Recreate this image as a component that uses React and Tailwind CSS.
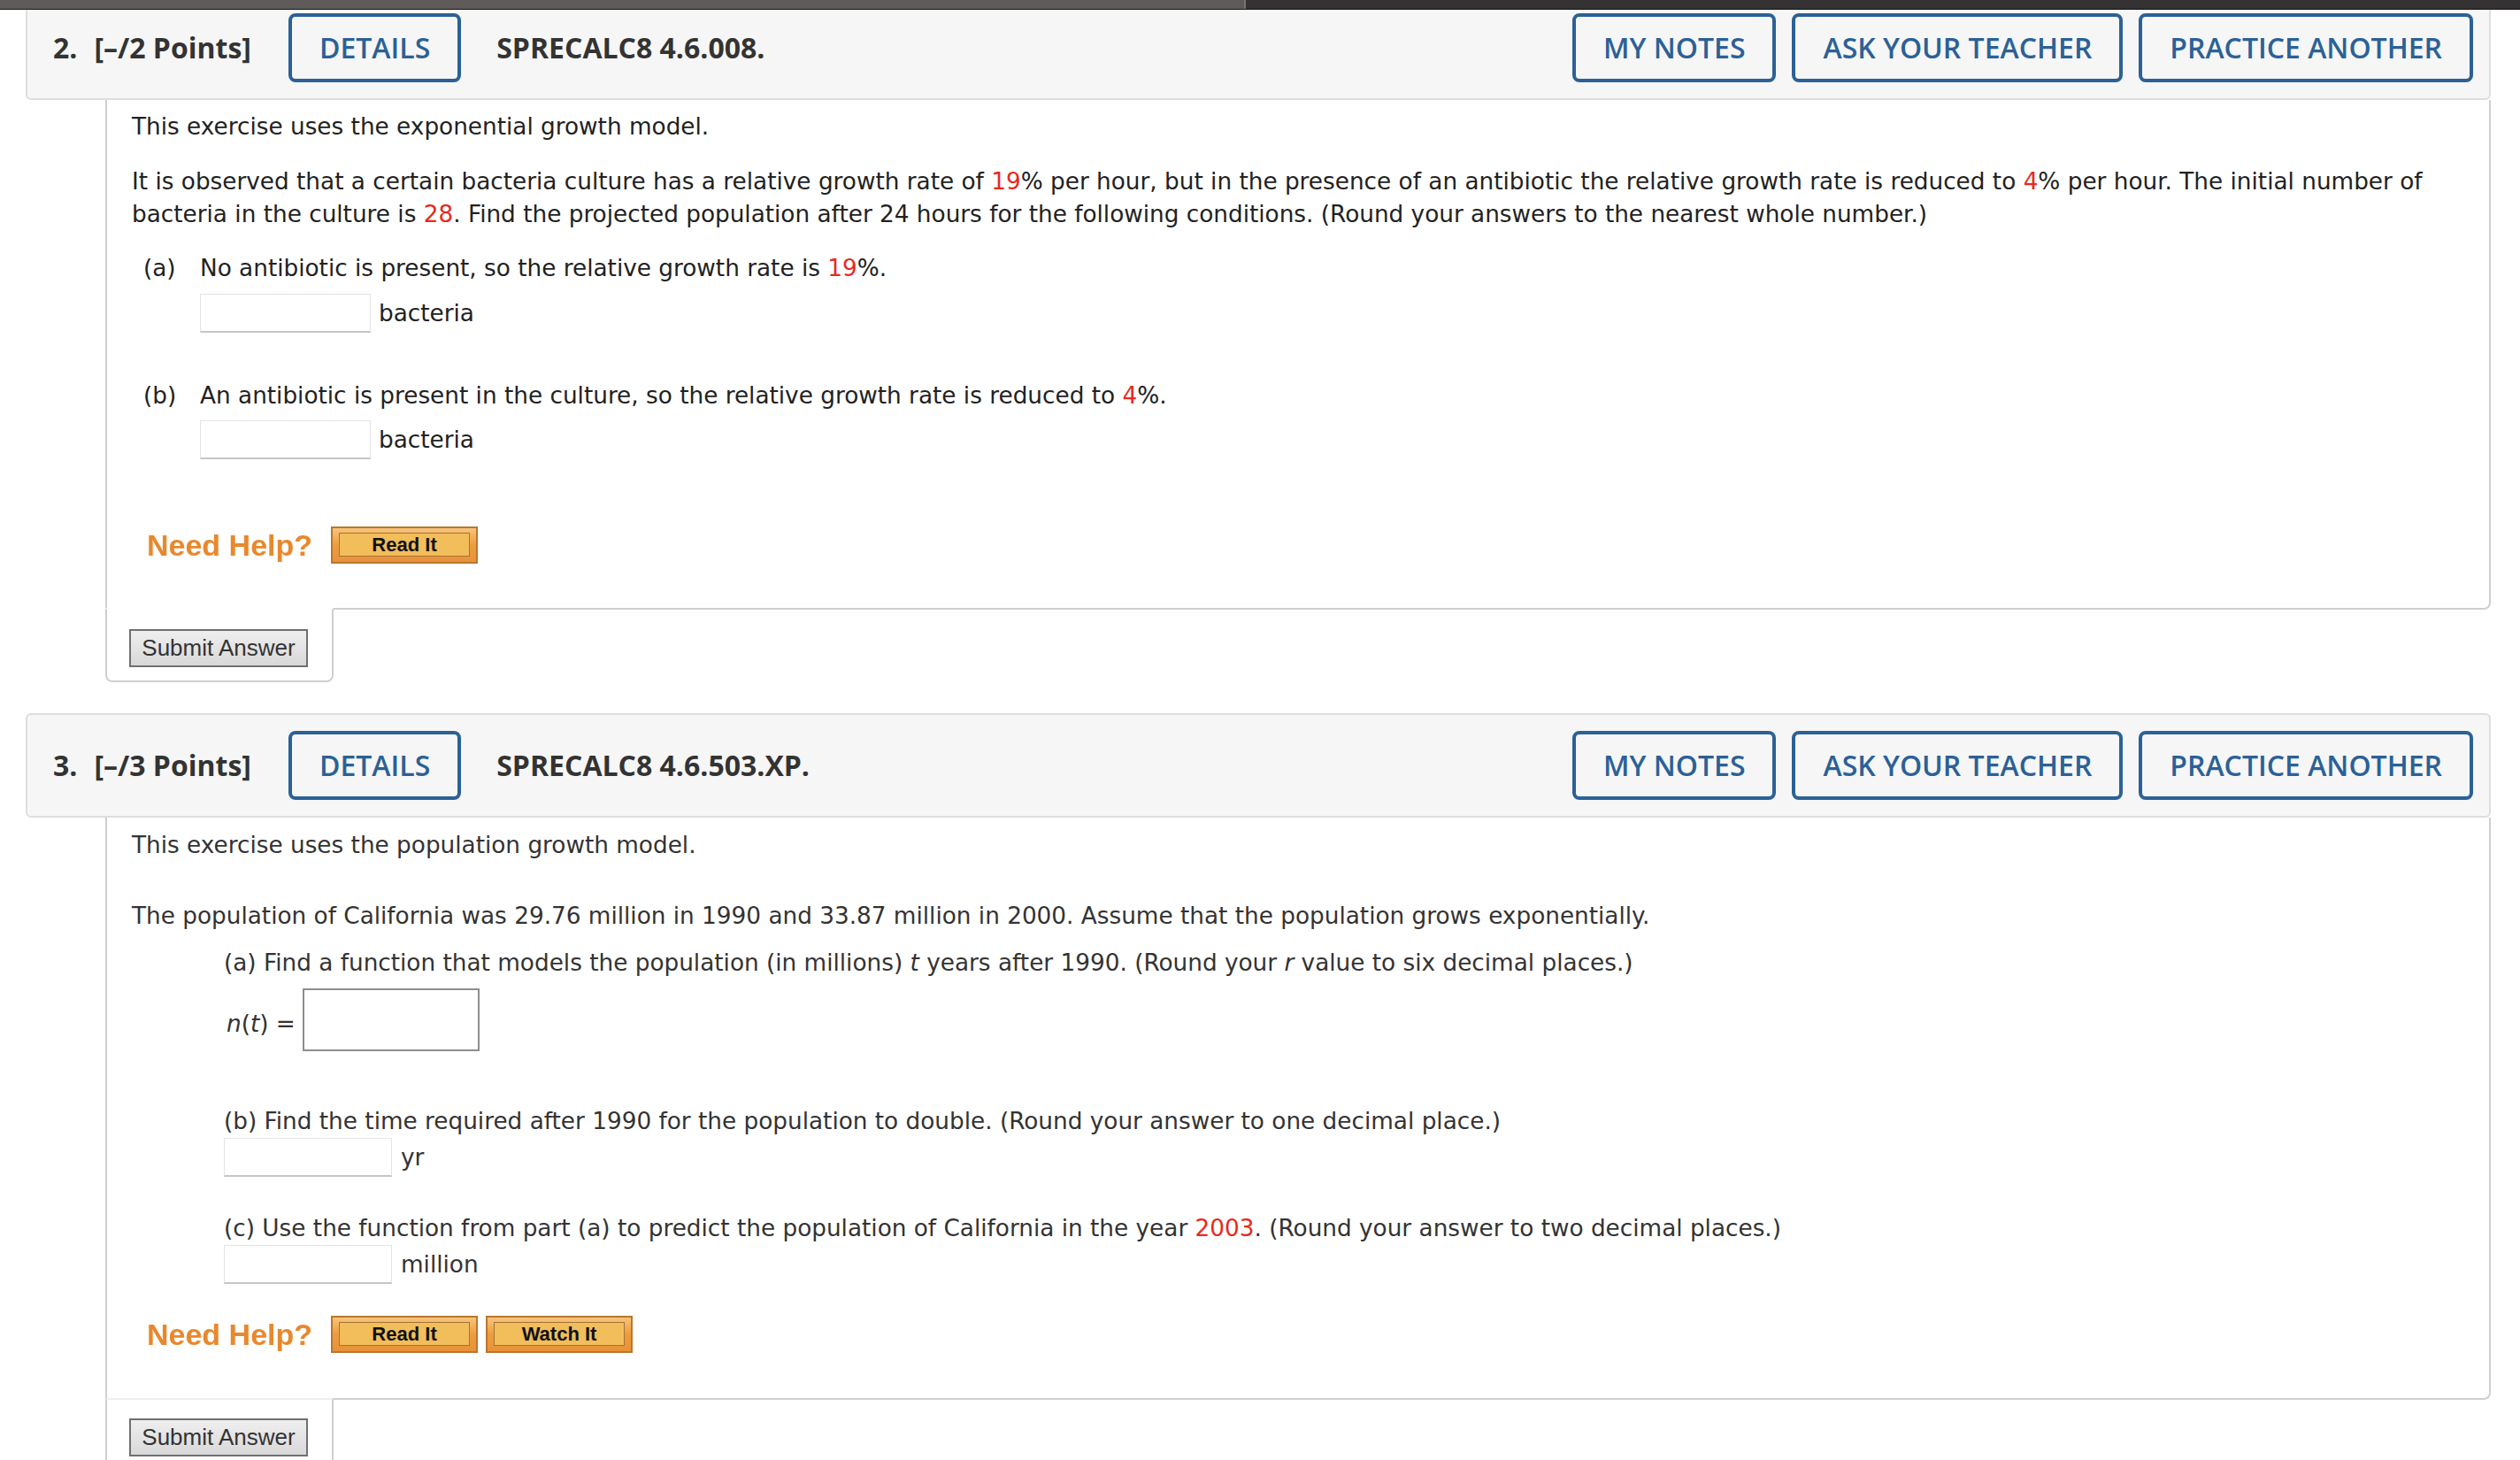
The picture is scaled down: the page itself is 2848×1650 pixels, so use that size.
import React from 'react';

const body = "font-['DejaVu_Sans',sans-serif] text-[26.3px] leading-[37px]";

function Red({ children }) {
  return <span className="text-[#e8291c]">{children}</span>;
}

function HeaderButton({ children }) {
  return (
    <button className="h-[78px] px-[31px] border-[4px] border-[#2b6196] rounded-[8px] text-[#2b6196] font-semibold bg-transparent">
      {children}
    </button>
  );
}

function Header({ number, points, code, first }) {
  return (
    <div
      className={`${first ? '-mt-[16px]' : 'mt-[35px]'} flex items-center h-[118px] pl-[29px] pr-[18px] border-2 border-[#dedede] rounded-[6px] bg-[#f6f6f6] font-['Open_Sans',sans-serif] text-[32px] text-[#333]`}
    >
      <span className="font-bold">{number}.</span>
      <span className="font-bold ml-[19px]">[–/{points} Points]</span>
      <div className="ml-[42px]">
        <HeaderButton>DETAILS</HeaderButton>
      </div>
      <span className="font-bold ml-[40px]">{code}</span>
      <div className="ml-auto flex gap-[18px]">
        <HeaderButton>MY NOTES</HeaderButton>
        <HeaderButton>ASK YOUR TEACHER</HeaderButton>
        <HeaderButton>PRACTICE ANOTHER</HeaderButton>
      </div>
    </div>
  );
}

function AnswerBox({ width }) {
  return (
    <span
      className={`inline-block h-[44px] ${width} bg-white border border-[#e4e4e4] border-b-2 border-b-[#c6c6c6]`}
    />
  );
}

function HelpButton({ label }) {
  return (
    <span className="inline-flex h-[42px] w-[166px] p-[5px_7px_6px_7px] border-2 border-[#b8772f] bg-gradient-to-b from-[#f7c47a] via-[#ee9c3e] to-[#e8923a]">
      <span className="flex-1 flex items-center justify-center border border-[#a27438] bg-[#f2bd5b] font-['Liberation_Sans',sans-serif] font-bold text-[22px] text-[#111]">
        {label}
      </span>
    </span>
  );
}

function NeedHelp({ buttons }) {
  return (
    <div className="flex items-center pl-[17px]">
      <span className="font-['Liberation_Sans',sans-serif] font-bold text-[34px] text-[#e8882d] blur-[0.6px]">
        Need Help?
      </span>
      <div className="flex gap-[9px] ml-[21px]">
        {buttons.map((b) => (
          <HelpButton key={b} label={b} />
        ))}
      </div>
    </div>
  );
}

function SubmitTab({ pt, topLine }) {
  return (
    <div
      className={`relative -mt-[2px] w-[258px] ${pt} pb-[15px] pl-[25px] border-2 ${topLine} border-x-[#cfcfcf] border-b-[#cfcfcf] rounded-b-[8px] bg-white`}
    >
      <button className="h-[43px] w-[202px] border-2 border-[#707070] bg-gradient-to-b from-[#efefef] to-[#d8d8d8] font-['Liberation_Sans',sans-serif] text-[26px] text-[#333]">
        Submit Answer
      </button>
    </div>
  );
}

function Question2() {
  return (
    <>
      <Header number={2} points={2} code="SPRECALC8 4.6.008." first />
      <div className="ml-[90px]">
        <div className={`${body} text-[#222] border-x-2 border-b-2 border-[#cfcfcf] rounded-br-[8px] pl-[28px] pt-[12px] pb-[50px]`}>
          <p>This exercise uses the exponential growth model.</p>
          <p className="mt-[25px]">
            It is observed that a certain bacteria culture has a relative growth rate of <Red>19</Red>% per hour, but in the presence of an antibiotic the relative growth rate is reduced to <Red>4</Red>% per hour. The initial number of
            <br />
            bacteria in the culture is <Red>28</Red>. Find the projected population after 24 hours for the following conditions. (Round your answers to the nearest whole number.)
          </p>
          <div className="mt-[24px] flex pl-[13px]">
            <span className="w-[64px]">(a)</span>
            <div>
              <p>No antibiotic is present, so the relative growth rate is <Red>19</Red>%.</p>
              <div className="mt-[10px] flex items-center">
                <AnswerBox width="w-[193px]" />
                <span className="ml-[9px]">bacteria</span>
              </div>
            </div>
          </div>
          <div className="mt-[53px] flex pl-[13px]">
            <span className="w-[64px]">(b)</span>
            <div>
              <p>An antibiotic is present in the culture, so the relative growth rate is reduced to <Red>4</Red>%.</p>
              <div className="mt-[9px] flex items-center">
                <AnswerBox width="w-[193px]" />
                <span className="ml-[9px]">bacteria</span>
              </div>
            </div>
          </div>
          <div className="mt-[76px]">
            <NeedHelp buttons={['Read It']} />
          </div>
        </div>
        <SubmitTab pt="pt-[22px]" topLine="border-t-white" />
      </div>
    </>
  );
}

function Question3() {
  return (
    <>
      <Header number={3} points={3} code="SPRECALC8 4.6.503.XP." />
      <div className="ml-[90px]">
        <div className={`${body} text-[#333] border-x-2 border-b-2 border-[#cfcfcf] rounded-br-[8px] pl-[28px] pt-[13px] pb-[51px]`}>
          <p>This exercise uses the population growth model.</p>
          <p className="mt-[43px]">
            The population of California was 29.76 million in 1990 and 33.87 million in 2000. Assume that the population grows exponentially.
          </p>
          <div className="pl-[104px]">
            <p className="mt-[16px]">
              (a) Find a function that models the population (in millions) <i>t</i> years after 1990. (Round your <i>r</i> value to six decimal places.)
            </p>
            <div className="mt-[10px] flex items-center pl-[3px]">
              <span className="mt-[10px]">
                <i>n</i>(<i>t</i>) =
              </span>
              <span className="ml-[8px] inline-block h-[71px] w-[200px] border-2 border-[#8e8e8e] bg-white" />
            </div>
            <p className="mt-[61px]">(b) Find the time required after 1990 for the population to double. (Round your answer to one decimal place.)</p>
            <div className="flex items-center">
              <AnswerBox width="w-[190px]" />
              <span className="ml-[10px]">yr</span>
            </div>
            <p className="mt-[40px]">
              (c) Use the function from part (a) to predict the population of California in the year <Red>2003</Red>. (Round your answer to two decimal places.)
            </p>
            <div className="flex items-center">
              <AnswerBox width="w-[190px]" />
              <span className="ml-[10px]">million</span>
            </div>
          </div>
          <div className="mt-[36px]">
            <NeedHelp buttons={['Read It', 'Watch It']} />
          </div>
        </div>
        <SubmitTab pt="pt-[21px]" topLine="border-t-[#eeeeee]" />
      </div>
    </>
  );
}

export default function App() {
  return (
    <div className="w-[2848px] h-[1650px] overflow-hidden bg-white">
      <div className="relative z-10 flex h-[11px] border-b border-[#111]">
        <div className="w-[1406px] bg-[#5f5b5b]" />
        <div className="w-[2px] bg-[#767272]" />
        <div className="flex-1 bg-[#343233]" />
      </div>
      <div className="pl-[29px] pr-[33px]">
        <Question2 />
        <Question3 />
      </div>
    </div>
  );
}
